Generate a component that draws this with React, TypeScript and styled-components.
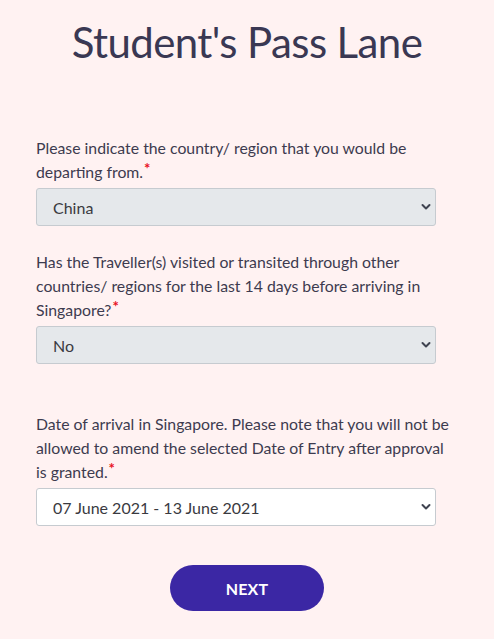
import styled, { createGlobalStyle } from "styled-components";

const GlobalStyle = createGlobalStyle`
  html, body {
    margin: 0;
    padding: 0;
    background: #fff2f2;
  }
  body {
    font-family: Lato, "Open Sans", sans-serif;
    color: #3d3b4f;
  }
`;

const Page = styled.div`
  min-height: 639px;
  display: flex;
  flex-direction: column;
`;

const Title = styled.h1`
  margin: 16px 0 0;
  text-align: center;
  font-size: 42px;
  font-weight: 400;
  letter-spacing: -0.6px;
  line-height: 52px;
  color: #3a3853;
`;

const Form = styled.form`
  width: 420px;
  padding: 68px 0 0 36px;
  display: flex;
  flex-direction: column;
`;

const Field = styled.div<{ $gap: number }>`
  margin-top: ${(p) => p.$gap}px;
  display: flex;
  flex-direction: column;
  gap: 4px;
`;

const Label = styled.label`
  font-size: 15.8px;
  line-height: 24px;
  color: #3d3b4f;
`;

const Required = styled.span`
  position: relative;
  top: -4px;
  margin-left: 1px;
  color: #e8101e;
  font-size: 15px;
  font-weight: 700;
  line-height: 1;
`;

const SelectWrap = styled.div`
  position: relative;
  width: 400px;
`;

const Select = styled.select<{ $filled?: boolean }>`
  appearance: none;
  width: 100%;
  height: 38px;
  margin: 0;
  padding: 0 30px 0 16px;
  border: 1px solid #c6cbd0;
  border-radius: 3px;
  background: ${(p) => (p.$filled ? "#e5e8eb" : "#ffffff")};
  font-family: Lato, "Open Sans", sans-serif;
  font-size: 16px;
  color: #3a3a3f;
  box-sizing: border-box;
`;

const Chevron = styled.svg`
  position: absolute;
  right: 5px;
  top: 15px;
  pointer-events: none;
`;

const ButtonRow = styled.div`
  display: flex;
  justify-content: center;
  margin: 39px 0 0 -36px;
  width: 494px;
`;

const NextButton = styled.button`
  width: 154px;
  height: 46px;
  border: none;
  border-radius: 23px;
  background: #3b27a4;
  color: #ffffff;
  font-family: Lato, "Open Sans", sans-serif;
  font-size: 16px;
  font-weight: 700;
  letter-spacing: 0.2px;
`;

function Arrow() {
  return (
    <Chevron width="10" height="8" viewBox="0 0 10 8">
      <path
        d="M1.5 2 L5 5.5 L8.5 2"
        fill="none"
        stroke="#3f4350"
        strokeWidth="2"
        strokeLinecap="round"
        strokeLinejoin="round"
      />
    </Chevron>
  );
}

interface QuestionProps {
  label: string;
  value: string;
  filled?: boolean;
  gap: number;
}

function Question({ label, value, filled, gap }: QuestionProps) {
  return (
    <Field $gap={gap}>
      <Label>
        {label}
        <Required>*</Required>
      </Label>
      <SelectWrap>
        <Select $filled={filled} defaultValue={value}>
          <option>{value}</option>
        </Select>
        <Arrow />
      </SelectWrap>
    </Field>
  );
}

export default function App() {
  return (
    <Page>
      <GlobalStyle />
      <Title>Student's Pass Lane</Title>
      <Form>
        <Question
          gap={0}
          filled
          label="Please indicate the country/ region that you would be departing from."
          value="China"
        />
        <Question
          gap={24}
          filled
          label="Has the Traveller(s) visited or transited through other countries/ regions for the last 14 days before arriving in Singapore?"
          value="No"
        />
        <Question
          gap={48}
          label="Date of arrival in Singapore. Please note that you will not be allowed to amend the selected Date of Entry after approval is granted."
          value="07 June 2021 - 13 June 2021"
        />
        <ButtonRow>
          <NextButton type="button">NEXT</NextButton>
        </ButtonRow>
      </Form>
    </Page>
  );
}
